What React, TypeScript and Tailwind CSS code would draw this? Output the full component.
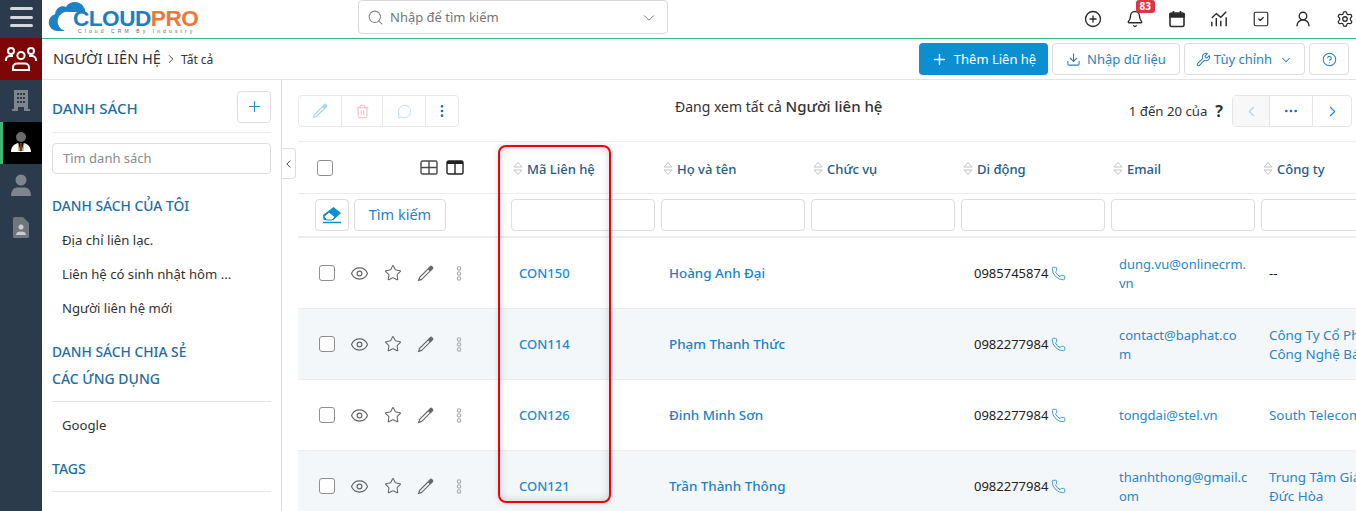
import { Bell, ChevronDown, ChevronLeft, ChevronRight, CircleHelp, CirclePlus, Download, EllipsisVertical, Ellipsis, Eye, MessageCircle, Phone, Plus, Search, Settings, Star, SquareCheck, Trash2, UserRound, Wrench } from 'lucide-react';

const font = "font-['Noto_Sans',sans-serif]";

const columns = ['Mã Liên hệ', 'Họ và tên', 'Chức vụ', 'Di động', 'Email', 'Công ty'];

const rows = [
  { code: 'CON150', name: 'Hoàng Anh Đại', phone: '0985745874', email: ['dung.vu@onlinecrm.', 'vn'], company: [] as string[] },
  { code: 'CON114', name: 'Phạm Thanh Thức', phone: '0982277984', email: ['contact@baphat.co', 'm'], company: ['Công Ty Cổ Phần', 'Công Nghệ Bá'] },
  { code: 'CON126', name: 'Đinh Minh Sơn', phone: '0982277984', email: ['tongdai@stel.vn'], company: ['South Telecom'] },
  { code: 'CON121', name: 'Trần Thành Thông', phone: '0982277984', email: ['thanhthong@gmail.c', 'om'], company: ['Trung Tâm Giáo', 'Đức Hòa'] },
];

function SortIcon() {
  return (
    <svg width="10" height="15" viewBox="0 0 10 15" fill="none" stroke="#c4c4c4" strokeWidth="1" className="shrink-0 -mt-[3px]">
      <path d="M1 6h8L5 1.500zM1 9h8l-4 4.500z" />
    </svg>
  );
}

function PencilIcon({ color, size }: { color: string; size: number }) {
  return (
    <svg width={size} height={size} viewBox="0 0 16 16" fill="none" stroke={color} strokeWidth="1.100">
      <path d="M4.500 13.500L1.500 14.500l1-3L10.500 3.500l2 2z" />
      <path d="M11 3l1.500-1.500a1 1 0 0 1 1.400 0l.6.6a1 1 0 0 1 0 1.400L13 5z" fill={color} />
    </svg>
  );
}

function Rail() {
  return (
    <div className="w-[42px] shrink-0 bg-[#2c3b4b] flex flex-col">
      <div className="h-[38px] flex flex-col items-center justify-center gap-[5.5px] pb-[4px]">
        <div className="w-[23px] h-[3px] rounded bg-[#d5d8db]" />
        <div className="w-[23px] h-[3px] rounded bg-[#d5d8db]" />
        <div className="w-[23px] h-[3px] rounded bg-[#d5d8db]" />
      </div>
      <div className="h-[42px] bg-[#7d0606] flex items-center justify-center">
        <svg width="32" height="26" viewBox="0 0 32 26" fill="none" stroke="#fff" strokeWidth="2">
          <circle cx="16" cy="9.500" r="3.600" />
          <circle cx="6" cy="5" r="3" />
          <circle cx="26" cy="5" r="3" />
          <path d="M8 24v-2.500a4 4 0 0 1 4-4h8a4 4 0 0 1 4 4V24z" />
          <path d="M1 15v-1a4 4 0 0 1 4-4h3M31 15v-1a4 4 0 0 0-4-4h-3" />
        </svg>
      </div>
      <div className="h-[42px] flex items-center justify-center">
        <svg width="18" height="22" viewBox="0 0 18 22" fill="#7f858c">
          <path d="M2 0h14v19h2v2h-6v-4H6v4H0v-2h2z" />
          <path fill="#2c3b4b" d="M5 3h2v2H5zM8 3h2v2H8zM11 3h2v2h-2zM5 7h2v2H5zM8 7h2v2H8zM11 7h2v2h-2zM5 11h2v2H5zM8 11h2v2H8zM11 11h2v2h-2z" />
        </svg>
      </div>
      <div className="h-[42px] bg-black border-l-[3px] border-[#3cb878] flex items-center justify-center pr-[3px]">
        <svg width="20" height="24" viewBox="0 0 20 24">
          <circle cx="10" cy="6" r="5" fill="#6b6b6b" />
          <path d="M0 21c0-5 3-8 7-9l3 9 3-9c4 1 7 4 7 9z" fill="#fff" />
          <path d="M9 12h2l.6 8h-3.200z" fill="#5a4030" />
          <path d="M7 12l1 8M13 12l-1 8" stroke="#d9822b" strokeWidth="0.800" />
        </svg>
      </div>
      <div className="h-[42px] flex items-center justify-center">
        <svg width="20" height="22" viewBox="0 0 20 22" fill="#7f858c">
          <circle cx="10" cy="6" r="5.500" />
          <path d="M0 22c0-6 3-8.500 7-8.500h6c4 0 7 2.500 7 8.500z" />
        </svg>
      </div>
      <div className="h-[42px] flex items-center justify-center">
        <svg width="16" height="21" viewBox="0 0 16 21" fill="#6f767e">
          <path d="M1.500 0H10l6 6v13.500a1.500 1.500 0 0 1-1.500 1.500h-13A1.500 1.500 0 0 1 0 19.500v-18A1.500 1.500 0 0 1 1.500 0z" />
          <circle cx="8" cy="10" r="2.500" fill="#c9ccd0" />
          <path d="M3 18c0-2.500 2-3.500 5-3.500s5 1 5 3.500z" fill="#c9ccd0" />
        </svg>
      </div>
    </div>
  );
}

function Logo() {
  return (
    <div className="relative w-[160px] h-[38px] ml-[6px]">
      <svg width="48" height="32" viewBox="0 0 48 32" className="absolute left-0 top-0">
        <path d="M9 31a8.500 8.500 0 0 1-2-16.700C8 7 14 5 18 7c3-6 13-7 17-1 3 4 2 6 2 6H22a9 9 0 0 0-5 19z" fill="#1b82c7" />
      </svg>
      <div className="absolute left-[25px] top-[9px] font-['Liberation_Sans',sans-serif] font-bold text-[22.6px] leading-[20px] tracking-[-0.5px] whitespace-nowrap">
        <span className="text-[#1b7fc1]">CLOUD</span>
        <span className="text-[#f0763a]">PRO</span>
      </div>
      <div className="absolute left-[30px] top-[29px] font-['Liberation_Sans',sans-serif] text-[5px] leading-[4px] tracking-[3.1px] text-[#666] whitespace-nowrap">
        Cloud CRM By Industry
      </div>
    </div>
  );
}

function TopBar() {
  return (
    <div className="h-[39px] shrink-0 border-b border-[#3cb878] flex items-center">
      <Logo />
      <div className="ml-[150px] w-[310px] h-[34px] -mt-[4px] border border-[#d9d9d9] rounded flex items-center pl-[8px] pr-[9px] pt-[1px] text-[#757575] text-[13px]">
        <Search size={17} strokeWidth={1.5} className="text-[#888]" />
        <span className="ml-[6px] flex-1">Nhập để tìm kiếm</span>
        <ChevronDown size={18} strokeWidth={1.25} className="text-[#777]" />
      </div>
      <div className="ml-auto flex items-center gap-[24px] pr-[2px] text-[#2b2b2b]">
        <CirclePlus size={18} strokeWidth={1.8} />
        <div className="relative">
          <Bell size={18} strokeWidth={1.8} />
          <span className="absolute -top-[10px] -right-[11px] bg-[#dc3545] text-white text-[10px] font-bold leading-[13px] px-[4px] rounded-[3px]">83</span>
        </div>
        <svg width="18" height="18" viewBox="0 0 18 18" fill="none" stroke="currentColor" strokeWidth="1.600">
          <rect x="2" y="3" width="14" height="13.500" rx="1.500" />
          <path d="M2 4h14v3H2z" fill="currentColor" />
          <path d="M5.500 1v3M12.500 1v3" />
        </svg>
        <svg width="18" height="18" viewBox="0 0 20 18" fill="none" stroke="currentColor" strokeWidth="1.600">
          <path d="M2 8l5-5 5 4 6-6" />
          <path d="M2 12v5M7 8v9M12 11v6M18 7v10" />
        </svg>
        <SquareCheck size={18} strokeWidth={1.6} />
        <UserRound size={18} strokeWidth={1.8} />
        <Settings size={18} strokeWidth={1.7} />
      </div>
    </div>
  );
}

function HeaderRow() {
  return (
    <div className="h-[41px] shrink-0 border-b border-[#e5e5e5] flex items-center pl-[11px] pr-[7px]">
      <span className="text-[14.6px] text-[#333]">NGƯỜI LIÊN HỆ</span>
      <ChevronRight size={14} strokeWidth={1.5} className="ml-[3px] text-[#333]" />
      <span className="ml-[3px] pt-[2px] text-[12px] text-[#333]">Tất cả</span>
      <div className="ml-auto flex items-center gap-[4px] text-[13px]">
        <button className="h-[32px] w-[129px] pt-[1px] bg-[#0c8fd0] rounded text-white flex items-center justify-center gap-[6px]">
          <Plus size={17} strokeWidth={2} />
          Thêm Liên hệ
        </button>
        <button className="h-[32px] w-[128px] pt-[1px] border border-[#ddd] rounded text-[#2a7fc1] flex items-center justify-center gap-[6px]">
          <Download size={15} strokeWidth={1.7} />
          Nhập dữ liệu
        </button>
        <button className="h-[32px] w-[121px] pt-[1px] border border-[#ddd] rounded text-[#2a7fc1] flex items-center justify-center gap-[3px]">
          <Wrench size={15} strokeWidth={1.7} />
          Tùy chỉnh
          <ChevronDown size={14} strokeWidth={1.8} className="ml-[4px]" />
        </button>
        <button className="h-[32px] w-[40px] border border-[#ddd] rounded text-[#2a7fc1] flex items-center justify-center">
          <CircleHelp size={15} strokeWidth={1.7} />
        </button>
      </div>
    </div>
  );
}

function Sidebar() {
  return (
    <div className="w-[240px] shrink-0 border-r border-[#ddd] pl-[10px] pr-[10px] text-[13.15px]">
      <div className="h-[52px] mt-[1px] border-b border-[#eee] flex items-center justify-between">
        <span className="pt-[3px] text-[15px] font-medium text-[#1c6ea4]">DANH SÁCH</span>
        <button className="w-[34px] h-[32px] border border-[#ddd] rounded flex items-center justify-center text-[#1c8fd0]">
          <Plus size={17} strokeWidth={1.5} />
        </button>
      </div>
      <div className="mt-[10px] h-[31px] border border-[#ddd] rounded px-[10px] flex items-center text-[#8a8a8a] text-[13px]">Tìm danh sách</div>
      <div className="mt-[22px] text-[13.8px] leading-[19px] font-medium text-[#1c6ea4]">DANH SÁCH CỦA TÔI</div>
      <div className="mt-[16px] flex flex-col gap-[16px] pl-[10px] text-[#333] leading-[18px]">
        <span>Địa chỉ liên lạc.</span>
        <span className="whitespace-nowrap">Liên hệ có sinh nhật hôm ...</span>
        <span>Người liên hệ mới</span>
      </div>
      <div className="mt-[25px] text-[13.8px] leading-[19px] font-medium text-[#1c6ea4]">DANH SÁCH CHIA SẺ</div>
      <div className="mt-[8px] pb-[13px] border-b border-[#e5e5e5] text-[14px] leading-[19px] font-medium text-[#1c6ea4]">CÁC ỨNG DỤNG</div>
      <div className="mt-[14px] pl-[10px] leading-[18px] text-[#333]">Google</div>
      <div className="mt-[16px] pt-[9px] pb-[12px] border-b border-[#e5e5e5] leading-[19px] font-medium text-[#1c6ea4]">
        <span className="text-[14px]">TAGS</span>
      </div>
    </div>
  );
}

function Toolbar() {
  return (
    <div className="h-[62px] ml-[16px] border-b border-[#eee] flex items-start pt-[15px] text-[13px]">
      <div className="flex h-[32px] border border-[#e8e8e8] rounded">
        <div className="w-[43px] flex items-center justify-center border-r border-[#e8e8e8]"><PencilIcon color="#a9d5f0" size={16} /></div>
        <div className="w-[41px] flex items-center justify-center border-r border-[#e8e8e8] text-[#f2b5bd]"><Trash2 size={15} strokeWidth={1.5} /></div>
        <div className="w-[43px] flex items-center justify-center border-r border-[#e8e8e8] text-[#a9d5f0]"><MessageCircle size={15} strokeWidth={1.25} /></div>
        <div className="w-[32px] flex items-center justify-center text-[#1c6ea4]"><EllipsisVertical size={16} strokeWidth={2} /></div>
      </div>
      <div className="ml-[216px] text-[14px] text-[#333] whitespace-nowrap">
        Đang xem tất cả <span className="text-[15px] font-medium">Người liên hệ</span>
      </div>
      <div className="ml-auto flex items-center h-[32px] pr-[4px]">
        <span className="pt-[1px] text-[13.2px] text-[#333]">1 đến 20 của</span>
        <span className="ml-[8px] mr-[9px] text-[16px] font-bold text-[#333]">?</span>
        <div className="flex h-[32px] border border-[#e5e5e5] rounded text-[#2a7fc1]">
          <div className="w-[37px] bg-[#f8f8f8] flex items-center justify-center border-r border-[#e5e5e5] text-[#a9d5f0]"><ChevronLeft size={17} strokeWidth={1.5} /></div>
          <div className="w-[43px] flex items-center justify-center border-r border-[#e5e5e5] text-[#1c6ea4]"><Ellipsis size={16} strokeWidth={2} /></div>
          <div className="w-[38px] flex items-center justify-center"><ChevronRight size={17} strokeWidth={1.5} /></div>
        </div>
      </div>
    </div>
  );
}

function Table() {
  return (
    <div className="ml-[16px] w-[1100px] text-[13px]">
      <div className="grid grid-cols-[207px_repeat(6,150px)] h-[52px] border-b border-[#eee]">
        <div className="flex items-center pl-[19px]">
          <div className="w-[16px] h-[16px] border border-[#8f8f8f] rounded-[3px]" />
          <svg width="18" height="15" viewBox="0 0 18 15" fill="none" stroke="#4a4a4a" strokeWidth="1.400" className="ml-[87px]">
            <rect x="1" y="1" width="16" height="13" rx="1.500" />
            <path d="M9 1v13M1 7.500h16" />
          </svg>
          <svg width="18" height="15" viewBox="0 0 18 15" fill="none" stroke="#222" strokeWidth="1.400" className="ml-[8px]">
            <rect x="1" y="1" width="16" height="13" rx="1.500" />
            <path d="M1 2.500h16" strokeWidth="3" />
            <path d="M9 1v13" />
          </svg>
        </div>
        {columns.map((c) => (
          <div key={c} className="flex items-center gap-[4px] pl-[8px] pt-[5px] font-medium text-[#255b85]">
            <SortIcon />
            <span>{c}</span>
          </div>
        ))}
      </div>
      <div className="grid grid-cols-[207px_repeat(6,150px)] h-[44px] border-b-[2px] border-[#eee]">
        <div className="flex items-start pt-[5px] pl-[17px] gap-[5px]">
          <button className="w-[34px] h-[32px] border border-[#ddd] rounded flex items-center justify-center">
            <svg width="20" height="17" viewBox="0 0 20 17">
              <path d="M11.500 0L19 6l-7.500 7H1.500V12L1 8z" fill="#0c8fd0" />
              <path d="M7 5l6 5-3 3H4.500L2 9.500z" fill="#fff" stroke="#0c8fd0" />
              <path d="M1 15.500h18" stroke="#0c8fd0" strokeWidth="1.500" />
            </svg>
          </button>
          <button className="w-[92px] h-[32px] border border-[#ddd] rounded text-[14.5px] text-[#2a7fc1]">Tìm kiếm</button>
        </div>
        {columns.map((c) => (
          <div key={c} className="pt-[5px] pl-[6px]">
            <div className="w-[144px] h-[32px] border border-[#ddd] rounded" />
          </div>
        ))}
      </div>
      {rows.map((r, i) => (
        <div key={r.code} className={`grid grid-cols-[207px_repeat(6,150px)] h-[71px] pt-[1px] border-b border-[#eee] items-center ${i % 2 === 1 ? 'bg-[#f4f7fa]' : 'bg-white'}`}>
          <div className="flex items-center pl-[21px] -mt-[1px] text-[#666]">
            <div className="w-[16px] h-[16px] border border-[#8f8f8f] rounded-[3px] bg-white" />
            <Eye size={19} strokeWidth={1.5} className="ml-[15px]" />
            <Star size={18} strokeWidth={1.4} className="ml-[15px]" />
            <span className="ml-[15px]"><PencilIcon color="#666" size={17} /></span>
            <svg width="6" height="15" viewBox="0 0 6 15" fill="none" stroke="#a8a8a8" strokeWidth="1.100" className="ml-[22px]">
              <circle cx="3" cy="2.500" r="1.700" />
              <circle cx="3" cy="7.500" r="1.700" />
              <circle cx="3" cy="12.500" r="1.700" />
            </svg>
          </div>
          <div className="pl-[14px] font-medium text-[#1a8acf]">{r.code}</div>
          <div className="pl-[14px] text-[13.4px] font-medium text-[#1a82c6] whitespace-nowrap">{r.name}</div>
          <div />
          <div className="pl-[19px] flex items-center gap-[3px] text-[#222]">
            {r.phone}
            <Phone size={15} strokeWidth={1.4} className="text-[#2a8ccf]" />
          </div>
          <div className="pl-[14px] leading-[19px] text-[#2a86c6] whitespace-nowrap">
            {r.email.map((e) => <div key={e}>{e}</div>)}
          </div>
          <div className="pl-[14px] leading-[19px] whitespace-nowrap">
            {r.company.length === 0 ? <span className="text-[#222]">--</span> : r.company.map((c) => <div key={c} className="text-[13.4px] text-[#2a86c6]">{c}</div>)}
          </div>
        </div>
      ))}
    </div>
  );
}

export default function App() {
  return (
    <div className={`${font} relative w-[1356px] h-[511px] overflow-hidden flex bg-white`}>
      <Rail />
      <div className="flex-1 min-w-0 flex flex-col">
        <TopBar />
        <HeaderRow />
        <div className="flex flex-1 min-h-0">
          <Sidebar />
          <div className="relative flex-1 min-w-0 overflow-hidden">
            <Toolbar />
            <Table />
            {/* collapse tab on the panel edge */}
            <div className="absolute left-0 top-[68px] w-[14px] h-[31px] bg-white border border-l-0 border-[#ddd] rounded-r flex items-center justify-center text-[#222]">
              <ChevronLeft size={16} strokeWidth={1.5} />
            </div>
          </div>
        </div>
      </div>
      {/* red annotation box from the screenshot */}
      <div className="absolute left-[498px] top-[145px] w-[113px] h-[358px] border-[2px] border-[#f0000a] rounded-[8px] shadow-[inset_0_0_8px_rgba(0,0,0,0.18),0_0_6px_rgba(0,0,0,0.12)]" />
    </div>
  );
}
